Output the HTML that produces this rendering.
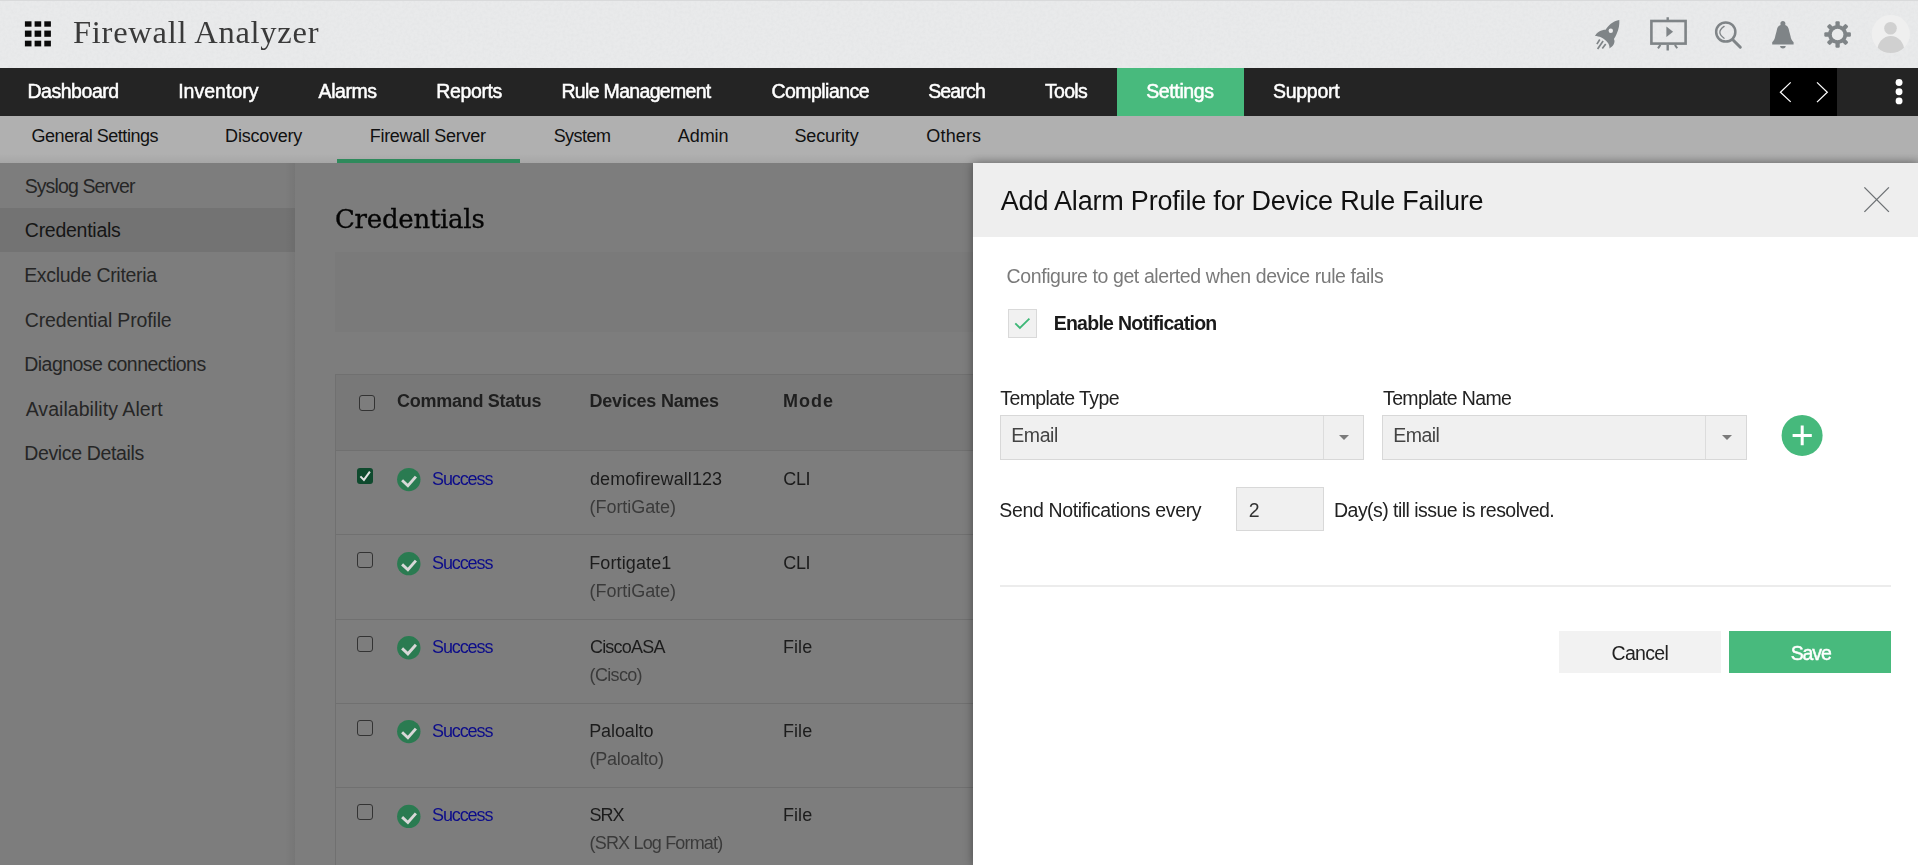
<!DOCTYPE html>
<html lang="en">
<head>
<meta charset="utf-8">
<title>Firewall Analyzer - Credentials</title>
<style>
html,body{margin:0;padding:0;}
body{width:1918px;height:865px;overflow:hidden;position:relative;background:#7d7d7d;font-family:'Liberation Sans',sans-serif;}
.t{position:absolute;white-space:nowrap;line-height:1;margin:0;padding:0;}
.abs{position:absolute;}
#topbar{position:absolute;left:0;top:0;width:1918px;height:68px;background:#e9eaeb;}
#nav{position:absolute;left:0;top:68px;width:1918px;height:48px;background:#242424;}
#nav .active{position:absolute;left:1117px;top:0;width:127px;height:48px;background:#48ba7d;}
#nav .scroll{position:absolute;left:1770px;top:0;width:67px;height:48px;background:#000;}
#subnav{position:absolute;left:0;top:116px;width:1918px;height:47px;background:#b0b0b0;}
#subnav .sh{position:absolute;left:0;bottom:0;width:1918px;height:9px;background:linear-gradient(to bottom,rgba(0,0,0,0),rgba(0,0,0,0.06));}
#subnav .ul{position:absolute;left:337px;top:43px;width:183px;height:4px;background:#2f8a5c;}
#sidebar{position:absolute;left:0;top:163px;width:295px;height:702px;background:#7d7d7d;}
#sidebar .edge{position:absolute;right:0;top:0;width:10px;height:702px;background:linear-gradient(to right,rgba(0,0,0,0),rgba(0,0,0,0.055));}
#sidebar .sel{position:absolute;left:0;top:45px;width:295px;height:44px;background:#737373;}
#filterbox{position:absolute;left:335px;top:252px;width:700px;height:80px;background:#7a7a7a;}
#tbl{position:absolute;left:335px;top:374px;width:700px;height:500px;border-left:1px solid #707070;border-top:1px solid #707070;box-sizing:border-box;}
#tbl .head{position:absolute;left:0;top:0;width:100%;height:75px;background:#787878;}
#tbl .ln{position:absolute;left:0;width:100%;height:1px;background:#707070;}
.cb{position:absolute;width:16.5px;height:16.5px;box-sizing:border-box;border:1.5px solid #333;border-radius:3px;background:#7d7d7d;}
.cb.on{border:none;background:#0f4a2e;}
#panel{position:absolute;left:973px;top:163px;width:945px;height:702px;background:#fff;box-shadow:0 0 9px 0 rgba(0,0,0,0.4);}
#panel .hd{position:absolute;left:0;top:0;width:945px;height:74px;background:#eeeeee;}
.selbox{position:absolute;top:252px;height:45px;box-sizing:border-box;background:#f0f0f0;border:1px solid #d8d8d8;}
.selbox .dv{position:absolute;top:0;width:1px;height:43px;background:#dcdcdc;}
.selbox .ar{position:absolute;top:18.5px;width:0;height:0;border-left:5px solid transparent;border-right:5px solid transparent;border-top:5.5px solid #7b7b7b;}
.gs{will-change:transform;}

</style>
</head>
<body>
<!-- ===== Top bar ===== -->
<header id="topbar">
  <svg class="abs" style="left:0;top:0" width="1918" height="68" aria-hidden="true">
    <filter id="grain" x="0" y="0" width="100%" height="100%"><feTurbulence type="fractalNoise" baseFrequency="0.35" numOctaves="2" seed="7"/><feColorMatrix type="matrix" values="0 0 0 0 0.45  0 0 0 0 0.48  0 0 0 0 0.5  0 0 0 1.6 -0.55"/></filter>
    <rect width="1918" height="68" filter="url(#grain)" opacity="0.09"/>
    <rect width="1918" height="1" fill="#d9dadb"/>
  </svg>
  <svg class="abs" style="left:24px;top:20px" width="30" height="30" viewBox="0 0 30 30">
    <g fill="#0a0a0a">
      <rect x="0.9" y="1.3" width="6.6" height="5.4"/><rect x="10.6" y="1.3" width="6.6" height="5.4"/><rect x="20.3" y="1.3" width="6.6" height="5.4"/>
      <rect x="0.9" y="10.6" width="6.6" height="6.2"/><rect x="10.6" y="10.6" width="6.6" height="6.2"/><rect x="20.3" y="10.6" width="6.6" height="6.2"/>
      <rect x="0.9" y="20.7" width="6.6" height="5.7"/><rect x="10.6" y="20.7" width="6.6" height="5.7"/><rect x="20.3" y="20.7" width="6.6" height="5.7"/>
    </g>
  </svg>
  <div class="abs gs" style="left:0;top:0"><div class="t" style="left:73.01px;top:16.10px;font-family:'Liberation Serif', serif;font-size:32.5px;font-weight:400;letter-spacing:0.733px;color:#3a3a3a;">Firewall Analyzer</div></div>
  <!-- right icons: drawn in page coordinates -->
  <svg class="abs" style="left:1580px;top:0" width="338" height="68" viewBox="1580 0 338 68">
    <!-- rocket -->
    <g fill="#7f8487">
      <path d="M1619.3 20 C1619.6 24 1619 29 1616.6 34 C1615.8 36 1614.8 37.6 1613.9 39 C1614.8 40.4 1614.7 42.6 1613.6 44.6 C1612.6 46.3 1611 47.6 1609.5 48.4 C1609.6 46.4 1609 44.2 1607.6 42.6 C1606 40.6 1603.8 38.8 1601.4 37.6 C1599.2 36.6 1597 36.1 1595 36.1 C1595.8 34.3 1597.2 32.7 1599.2 31.5 C1601.2 30.3 1603.6 29.8 1605.6 29.8 C1606.8 27.8 1608.6 25.6 1610.8 23.8 C1613.4 21.8 1616.4 20.4 1619.3 20 Z"/>
      <path d="M1599.8 39.5L1596.9 44.1M1603.1 41.1L1597.6 49M1605.7 43.9L1602.3 48.4" fill="none" stroke="#7f8487" stroke-width="1.7"/>
    </g>
    <circle cx="1610.8" cy="30.8" r="2.2" fill="#eeeeef"/>
    <!-- presentation -->
    <g fill="none" stroke="#7f8487">
      <rect x="1651.4" y="21" width="34.2" height="22.6" stroke-width="2.6"/>
      <path d="M1667.7 17.2V20M1667.7 44.9V50.4" stroke-width="2.4"/>
      <path d="M1660.4 44.9L1658 48.4M1674.9 44.9L1677.2 48.2" stroke-width="2"/>
    </g>
    <path d="M1666.4 26.6V36.9L1673.1 31.8Z" fill="#7f8487"/>
    <!-- search -->
    <g fill="none" stroke="#7f8487" stroke-linecap="round">
      <circle cx="1725.75" cy="32" r="9.6" stroke-width="2.5"/>
      <path d="M1733.3 40.2L1740.3 47.2" stroke-width="3"/>
      <path d="M1724.1 26.4Q1715.6 32.3 1724.1 38.2" stroke-width="1.3"/>
    </g>
    <!-- bell -->
    <g fill="#7f8487">
      <path d="M1782.9 21.1C1784.5 21.1 1785.5 22.2 1785.4 23.6L1785.2 25C1787.4 25.8 1788.5 27.5 1788.9 29.8C1789.5 32.5 1790.1 34.5 1790.5 36C1790.9 38.3 1791.6 40 1793.6 42.2V44.4H1772.2V42.2C1774.2 40 1774.9 38.3 1775.3 36C1775.7 34.5 1776.3 32.5 1776.9 29.8C1777.3 27.5 1778.4 25.8 1780.6 25L1780.4 23.6C1780.3 22.2 1781.3 21.1 1782.9 21.1Z"/>
      <path d="M1780.1 46h5.6a2.8 2.4 0 0 1 -5.6 0Z"/>
    </g>
    <!-- gear -->
    <g transform="translate(1837.6 34.5)" fill="#7f8487">
      <g id="teeth">
        <rect x="-2.15" y="-13.3" width="4.3" height="26.6" rx="1.2"/>
        <rect x="-2.15" y="-13.3" width="4.3" height="26.6" rx="1.2" transform="rotate(45)"/>
        <rect x="-2.15" y="-13.3" width="4.3" height="26.6" rx="1.2" transform="rotate(90)"/>
        <rect x="-2.15" y="-13.3" width="4.3" height="26.6" rx="1.2" transform="rotate(135)"/>
      </g>
      <path fill-rule="evenodd" d="M0 -9.6A9.6 9.6 0 1 0 0 9.6A9.6 9.6 0 1 0 0 -9.6ZM0 -5.9A5.9 5.9 0 1 1 0 5.9A5.9 5.9 0 1 1 0 -5.9Z"/>
    </g>
    <circle cx="1837.6" cy="34.5" r="5.8" fill="#e9eaeb"/>
    <!-- avatar -->
    <clipPath id="avc"><circle cx="1890.8" cy="34" r="19.1"/></clipPath>
    <circle cx="1890.8" cy="34" r="19.1" fill="#efefef"/>
    <g clip-path="url(#avc)" fill="#d0d0d0">
      <circle cx="1890.5" cy="28.2" r="6.3"/>
      <ellipse cx="1890.8" cy="50.4" rx="13.4" ry="14.5"/>
    </g>
  </svg>
</header>

<!-- ===== Main nav ===== -->
<nav id="nav">
  <div class="active"></div>
  <div class="scroll"></div>
  <svg class="abs" style="left:1770px;top:0" width="148" height="48" viewBox="1770 68 148 48">
    <g fill="none" stroke="#fff" stroke-width="1.25">
      <path d="M1790.7 82.4L1780.4 92.2L1790.7 101.9"/>
      <path d="M1817 82.4L1827.3 92.3L1817 102.1"/>
    </g>
    <g fill="#fff"><circle cx="1899.05" cy="82.5" r="3.45"/><circle cx="1899.05" cy="91.8" r="3.45"/><circle cx="1899.05" cy="100.9" r="3.45"/></g>
  </svg>
</nav>
<div class="abs gs" style="left:0;top:0"><div class="t" style="left:27.38px;top:82.01px;font-family:'Liberation Sans', sans-serif;font-size:19.5px;font-weight:400;letter-spacing:-0.449px;color:#ffffff;-webkit-text-stroke:0.5px #fff;">Dashboard</div>
<div class="t" style="left:178.15px;top:82.01px;font-family:'Liberation Sans', sans-serif;font-size:19.5px;font-weight:400;letter-spacing:0.029px;color:#ffffff;-webkit-text-stroke:0.5px #fff;">Inventory</div>
<div class="t" style="left:318.62px;top:82.01px;font-family:'Liberation Sans', sans-serif;font-size:19.5px;font-weight:400;letter-spacing:-0.447px;color:#ffffff;-webkit-text-stroke:0.5px #fff;">Alarms</div>
<div class="t" style="left:436.32px;top:82.01px;font-family:'Liberation Sans', sans-serif;font-size:19.5px;font-weight:400;letter-spacing:-0.370px;color:#ffffff;-webkit-text-stroke:0.5px #fff;">Reports</div>
<div class="t" style="left:561.47px;top:82.01px;font-family:'Liberation Sans', sans-serif;font-size:19.5px;font-weight:400;letter-spacing:-0.680px;color:#ffffff;-webkit-text-stroke:0.5px #fff;">Rule Management</div>
<div class="t" style="left:771.42px;top:82.01px;font-family:'Liberation Sans', sans-serif;font-size:19.5px;font-weight:400;letter-spacing:-0.526px;color:#ffffff;-webkit-text-stroke:0.5px #fff;">Compliance</div>
<div class="t" style="left:928.17px;top:82.01px;font-family:'Liberation Sans', sans-serif;font-size:19.5px;font-weight:400;letter-spacing:-0.844px;color:#ffffff;-webkit-text-stroke:0.5px #fff;">Search</div>
<div class="t" style="left:1044.92px;top:82.01px;font-family:'Liberation Sans', sans-serif;font-size:19.5px;font-weight:400;letter-spacing:-0.681px;color:#ffffff;-webkit-text-stroke:0.5px #fff;">Tools</div>
<div class="t" style="left:1146.17px;top:82.01px;font-family:'Liberation Sans', sans-serif;font-size:19.5px;font-weight:400;letter-spacing:-0.367px;color:#ffffff;-webkit-text-stroke:0.5px #fff;">Settings</div>
<div class="t" style="left:1273.07px;top:82.01px;font-family:'Liberation Sans', sans-serif;font-size:19.5px;font-weight:400;letter-spacing:-0.297px;color:#ffffff;-webkit-text-stroke:0.5px #fff;">Support</div></div>

<!-- ===== Sub nav ===== -->
<div id="subnav"><div class="sh"></div><div class="ul"></div></div>
<div class="abs" style="left:0;top:0"><div class="t" style="left:31.56px;top:127.04px;font-family:'Liberation Sans', sans-serif;font-size:18px;font-weight:400;letter-spacing:-0.477px;color:#111;">General Settings</div>
<div class="t" style="left:225.12px;top:127.04px;font-family:'Liberation Sans', sans-serif;font-size:18px;font-weight:400;letter-spacing:-0.219px;color:#111;">Discovery</div>
<div class="t" style="left:369.71px;top:127.04px;font-family:'Liberation Sans', sans-serif;font-size:18px;font-weight:400;letter-spacing:-0.275px;color:#111;">Firewall Server</div>
<div class="t" style="left:553.63px;top:127.04px;font-family:'Liberation Sans', sans-serif;font-size:18px;font-weight:400;letter-spacing:-0.520px;color:#111;">System</div>
<div class="t" style="left:677.79px;top:127.04px;font-family:'Liberation Sans', sans-serif;font-size:18px;font-weight:400;letter-spacing:-0.074px;color:#111;">Admin</div>
<div class="t" style="left:794.46px;top:127.04px;font-family:'Liberation Sans', sans-serif;font-size:18px;font-weight:400;letter-spacing:-0.117px;color:#111;">Security</div>
<div class="t" style="left:926.35px;top:127.04px;font-family:'Liberation Sans', sans-serif;font-size:18px;font-weight:400;letter-spacing:0.144px;color:#111;">Others</div></div>

<!-- ===== Sidebar ===== -->
<aside id="sidebar"><div class="sel"></div><div class="edge"></div></aside>
<div class="abs" style="left:0;top:0"><div class="t" style="left:24.63px;top:176.71px;font-family:'Liberation Sans', sans-serif;font-size:19.5px;font-weight:400;letter-spacing:-0.885px;color:#262626;">Syslog Server</div>
<div class="t" style="left:24.82px;top:220.91px;font-family:'Liberation Sans', sans-serif;font-size:19.5px;font-weight:400;letter-spacing:-0.264px;color:#161616;">Credentials</div>
<div class="t" style="left:24.20px;top:265.71px;font-family:'Liberation Sans', sans-serif;font-size:19.5px;font-weight:400;letter-spacing:-0.319px;color:#262626;">Exclude Criteria</div>
<div class="t" style="left:24.87px;top:310.51px;font-family:'Liberation Sans', sans-serif;font-size:19.5px;font-weight:400;letter-spacing:-0.163px;color:#262626;">Credential Profile</div>
<div class="t" style="left:24.20px;top:354.91px;font-family:'Liberation Sans', sans-serif;font-size:19.5px;font-weight:400;letter-spacing:-0.522px;color:#262626;">Diagnose connections</div>
<div class="t" style="left:25.65px;top:399.91px;font-family:'Liberation Sans', sans-serif;font-size:19.5px;font-weight:400;letter-spacing:0.048px;color:#262626;">Availability Alert</div>
<div class="t" style="left:24.20px;top:443.81px;font-family:'Liberation Sans', sans-serif;font-size:19.5px;font-weight:400;letter-spacing:-0.344px;color:#262626;">Device Details</div></div>

<!-- ===== Content ===== -->
<main class="abs gs" style="left:0;top:0">
  <div class="t" style="left:334.96px;top:206.20px;font-family:'DejaVu Serif', 'Liberation Serif', serif;font-size:26px;font-weight:400;letter-spacing:-0.260px;color:#050505;-webkit-text-stroke:0.3px #050505;">Credentials</div>
  <div id="filterbox"></div>
  <div id="tbl">
    <div class="head"></div>
    <div class="ln" style="top:75px"></div>
    <div class="ln" style="top:159px"></div>
    <div class="ln" style="top:244px"></div>
    <div class="ln" style="top:328px"></div>
    <div class="ln" style="top:412px"></div>
  </div>
  <div class="cb" style="left:358.6px;top:394.8px"></div>
  <div class="cb on" style="left:356.8px;top:467.5px"><svg width="16.5" height="16.5" viewBox="0 0 16.5 16.5" style="display:block"><path d="M3.4 8.4L6.9 11.9L12.9 3.6" fill="none" stroke="#e2e2e2" stroke-width="2"/></svg></div>
  <div class="cb" style="left:356.8px;top:551.6px"></div>
  <div class="cb" style="left:356.8px;top:635.6px"></div>
  <div class="cb" style="left:356.8px;top:719.7px"></div>
  <div class="cb" style="left:356.8px;top:803.7px"></div>
  <svg class="abs" style="left:396px;top:460px" width="30" height="405" viewBox="396 460 30 405">
        <g transform="translate(408.8 479.6)"><circle cx="0" cy="0" r="11.7" fill="#2a7b51"/><path d="M-6.7 0.7L-0.9 6.1L7.1 -3" fill="none" stroke="#d8d8d8" stroke-width="2.9"/></g>
    <g transform="translate(408.8 563.65)"><circle cx="0" cy="0" r="11.7" fill="#2a7b51"/><path d="M-6.7 0.7L-0.9 6.1L7.1 -3" fill="none" stroke="#d8d8d8" stroke-width="2.9"/></g>
    <g transform="translate(408.8 647.7)"><circle cx="0" cy="0" r="11.7" fill="#2a7b51"/><path d="M-6.7 0.7L-0.9 6.1L7.1 -3" fill="none" stroke="#d8d8d8" stroke-width="2.9"/></g>
    <g transform="translate(408.8 731.6)"><circle cx="0" cy="0" r="11.7" fill="#2a7b51"/><path d="M-6.7 0.7L-0.9 6.1L7.1 -3" fill="none" stroke="#d8d8d8" stroke-width="2.9"/></g>
    <g transform="translate(408.8 816.4)"><circle cx="0" cy="0" r="11.7" fill="#2a7b51"/><path d="M-6.7 0.7L-0.9 6.1L7.1 -3" fill="none" stroke="#d8d8d8" stroke-width="2.9"/></g>
  </svg>
  <div class="t" style="left:397.06px;top:392.00px;font-family:'Liberation Sans', sans-serif;font-size:18px;font-weight:700;letter-spacing:-0.276px;color:#1f1f1f;">Command Status</div>
<div class="t" style="left:589.49px;top:392.00px;font-family:'Liberation Sans', sans-serif;font-size:18px;font-weight:700;letter-spacing:-0.206px;color:#1f1f1f;">Devices Names</div>
<div class="t" style="left:783.10px;top:392.00px;font-family:'Liberation Sans', sans-serif;font-size:18px;font-weight:700;letter-spacing:0.974px;color:#1f1f1f;">Mode</div>
  <div class="t" style="left:432.01px;top:469.74px;font-family:'Liberation Sans', sans-serif;font-size:18px;font-weight:400;letter-spacing:-1.100px;color:#0c0c8a;">Success</div>
<div class="t" style="left:432.01px;top:553.79px;font-family:'Liberation Sans', sans-serif;font-size:18px;font-weight:400;letter-spacing:-1.100px;color:#0c0c8a;">Success</div>
<div class="t" style="left:432.01px;top:637.84px;font-family:'Liberation Sans', sans-serif;font-size:18px;font-weight:400;letter-spacing:-1.100px;color:#0c0c8a;">Success</div>
<div class="t" style="left:432.01px;top:721.89px;font-family:'Liberation Sans', sans-serif;font-size:18px;font-weight:400;letter-spacing:-1.100px;color:#0c0c8a;">Success</div>
<div class="t" style="left:432.01px;top:805.94px;font-family:'Liberation Sans', sans-serif;font-size:18px;font-weight:400;letter-spacing:-1.100px;color:#0c0c8a;">Success</div>
  <div class="t" style="left:589.97px;top:469.74px;font-family:'Liberation Sans', sans-serif;font-size:18px;font-weight:400;letter-spacing:0.074px;color:#1c1c1c;">demofirewall123</div>
<div class="t" style="left:589.23px;top:553.79px;font-family:'Liberation Sans', sans-serif;font-size:18px;font-weight:400;letter-spacing:0.124px;color:#1c1c1c;">Fortigate1</div>
<div class="t" style="left:589.97px;top:637.84px;font-family:'Liberation Sans', sans-serif;font-size:18px;font-weight:400;letter-spacing:-0.797px;color:#1c1c1c;">CiscoASA</div>
<div class="t" style="left:589.23px;top:721.89px;font-family:'Liberation Sans', sans-serif;font-size:18px;font-weight:400;letter-spacing:-0.108px;color:#1c1c1c;">Paloalto</div>
<div class="t" style="left:589.62px;top:805.94px;font-family:'Liberation Sans', sans-serif;font-size:18px;font-weight:400;letter-spacing:-1.100px;color:#1c1c1c;">SRX</div>
  <div class="t" style="left:589.58px;top:497.54px;font-family:'Liberation Sans', sans-serif;font-size:18px;font-weight:400;letter-spacing:-0.063px;color:#3a3a3a;">(FortiGate)</div>
<div class="t" style="left:589.58px;top:581.59px;font-family:'Liberation Sans', sans-serif;font-size:18px;font-weight:400;letter-spacing:-0.063px;color:#3a3a3a;">(FortiGate)</div>
<div class="t" style="left:589.58px;top:665.64px;font-family:'Liberation Sans', sans-serif;font-size:18px;font-weight:400;letter-spacing:-0.671px;color:#3a3a3a;">(Cisco)</div>
<div class="t" style="left:589.58px;top:749.69px;font-family:'Liberation Sans', sans-serif;font-size:18px;font-weight:400;letter-spacing:-0.301px;color:#3a3a3a;">(Paloalto)</div>
<div class="t" style="left:589.58px;top:833.74px;font-family:'Liberation Sans', sans-serif;font-size:18px;font-weight:400;letter-spacing:-0.826px;color:#3a3a3a;">(SRX Log Format)</div>
  <div class="t" style="left:783.34px;top:469.74px;font-family:'Liberation Sans', sans-serif;font-size:18px;font-weight:400;letter-spacing:-0.421px;color:#1c1c1c;">CLI</div>
<div class="t" style="left:783.34px;top:553.79px;font-family:'Liberation Sans', sans-serif;font-size:18px;font-weight:400;letter-spacing:-0.421px;color:#1c1c1c;">CLI</div>
<div class="t" style="left:782.90px;top:637.84px;font-family:'Liberation Sans', sans-serif;font-size:18px;font-weight:400;letter-spacing:0.088px;color:#1c1c1c;">File</div>
<div class="t" style="left:782.90px;top:721.89px;font-family:'Liberation Sans', sans-serif;font-size:18px;font-weight:400;letter-spacing:0.088px;color:#1c1c1c;">File</div>
<div class="t" style="left:782.90px;top:805.94px;font-family:'Liberation Sans', sans-serif;font-size:18px;font-weight:400;letter-spacing:0.088px;color:#1c1c1c;">File</div>
</main>

<!-- ===== Slide-in panel ===== -->
<section id="panel">
  <div class="hd"></div>
  <svg class="abs" style="left:886px;top:20px" width="36" height="36" viewBox="1859 183 36 36"><path d="M1864.4 187.4L1888.9 211.9M1888.9 187.4L1864.4 211.9" fill="none" stroke="#6b6f72" stroke-width="1.3"/></svg>
  <!-- enable checkbox -->
  <div class="abs" style="left:35px;top:146px;width:28.5px;height:28.5px;box-sizing:border-box;background:#f1f1f1;border:1px solid #d9d9d9;">
    <svg width="26" height="26" viewBox="0 0 26 26" style="display:block"><path d="M6.3 13.3L10.9 18L20.4 8.6" fill="none" stroke="#3db777" stroke-width="1.8"/></svg>
  </div>
  <div class="selbox" style="left:27px;width:364px"><div class="dv" style="left:322px"></div><div class="ar" style="left:337.5px"></div></div>
  <div class="selbox" style="left:409px;width:364.5px"><div class="dv" style="left:322px"></div><div class="ar" style="left:338.5px"></div></div>
  <!-- plus -->
  <svg class="abs" style="left:806px;top:250px" width="46" height="46" viewBox="1779 413 46 46"><circle cx="1802.1" cy="435.4" r="20.5" fill="#46b97c"/><path d="M1792.6 435.4H1811.8M1802.2 425.6V445.2" stroke="#fff" stroke-width="3" fill="none"/></svg>
  <!-- number input -->
  <div class="abs" style="left:263px;top:324px;width:88px;height:44px;box-sizing:border-box;background:#f0f0f0;border:1px solid #d8d8d8;"></div>
  <!-- divider -->
  <div class="abs" style="left:27px;top:422px;width:891px;height:2px;background:#ececec;"></div>
  <!-- buttons -->
  <div class="abs" style="left:586px;top:468px;width:162px;height:42px;background:#f2f2f2;"></div>
  <div class="abs" style="left:756px;top:468px;width:162px;height:42px;background:#48ba7d;"></div>
</section>
<div class="abs gs" style="left:0;top:0"><div class="t" style="left:1000.77px;top:187.90px;font-family:'Liberation Sans', sans-serif;font-size:27px;font-weight:400;letter-spacing:-0.196px;color:#111;">Add Alarm Profile for Device Rule Failure</div>
<div class="t" style="left:1006.62px;top:267.26px;font-family:'Liberation Sans', sans-serif;font-size:19.5px;font-weight:400;letter-spacing:-0.405px;color:#7a7a7a;">Configure to get alerted when device rule fails</div>
<div class="t" style="left:1053.64px;top:314.00px;font-family:'Liberation Sans', sans-serif;font-size:19.5px;font-weight:700;letter-spacing:-0.720px;color:#1a1a1a;">Enable Notification</div>
<div class="t" style="left:1000.34px;top:389.01px;font-family:'Liberation Sans', sans-serif;font-size:19.5px;font-weight:400;letter-spacing:-0.607px;color:#222;">Template Type</div>
<div class="t" style="left:1383.03px;top:389.01px;font-family:'Liberation Sans', sans-serif;font-size:19.5px;font-weight:400;letter-spacing:-0.634px;color:#222;">Template Name</div>
<div class="t" style="left:1011.24px;top:426.01px;font-family:'Liberation Sans', sans-serif;font-size:19.5px;font-weight:400;letter-spacing:-0.424px;color:#444;">Email</div>
<div class="t" style="left:1393.24px;top:426.01px;font-family:'Liberation Sans', sans-serif;font-size:19.5px;font-weight:400;letter-spacing:-0.519px;color:#444;">Email</div>
<div class="t" style="left:999.33px;top:500.91px;font-family:'Liberation Sans', sans-serif;font-size:19.5px;font-weight:400;letter-spacing:-0.351px;color:#222;">Send Notifications every</div>
<div class="t" style="left:1248.70px;top:500.91px;font-family:'Liberation Sans', sans-serif;font-size:19.5px;font-weight:400;letter-spacing:0.000px;color:#333;">2</div>
<div class="t" style="left:1334.06px;top:500.91px;font-family:'Liberation Sans', sans-serif;font-size:19.5px;font-weight:400;letter-spacing:-0.537px;color:#222;">Day(s) till issue is resolved.</div>
<div class="t" style="left:1611.55px;top:644.01px;font-family:'Liberation Sans', sans-serif;font-size:19.5px;font-weight:400;letter-spacing:-0.691px;color:#222;">Cancel</div>
<div class="t" style="left:1790.66px;top:644.01px;font-family:'Liberation Sans', sans-serif;font-size:19.5px;font-weight:400;letter-spacing:-1.100px;color:#fff;-webkit-text-stroke:0.45px #fff;">Save</div></div>

</body>
</html>
